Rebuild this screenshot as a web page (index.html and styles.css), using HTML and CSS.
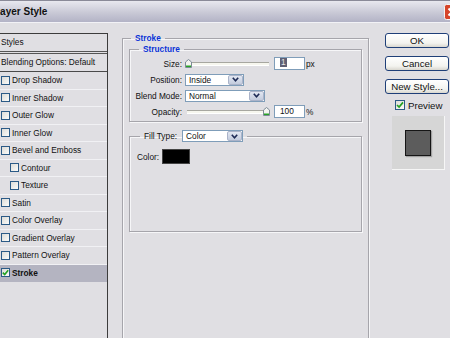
FILE: index.html
```html
<html>
<head>
    <title>Layer Style</title>
    <meta http-equiv="Content-Type" content="text/html; charset=utf-8"/>
    <link rel="stylesheet" href="styles.css">
</head>
<body>
<div class="dialog">
    <div class="titlebar">
        <span class="title">Layer Style</span>
        <span class="close">
            <svg width="16" height="16" viewBox="0 0 16 16">
                <rect x="0.5" y="0.5" width="15" height="15" rx="2" fill="#d6452a" stroke="#f4f4f4"/>
                <path d="M4.5 4.5 L11.5 11.5 M11.5 4.5 L4.5 11.5" stroke="#fff" stroke-width="2"/>
            </svg>
        </span>
    </div>

    <div class="content">
        <div class="styles">
            <div class="styles-head">Styles</div>
            <div class="styles-blend">Blending Options: Default</div>
            <ul class="style-list">
                <li><span class="check"></span>Drop Shadow</li>
                <li><span class="check"></span>Inner Shadow</li>
                <li><span class="check"></span>Outer Glow</li>
                <li><span class="check"></span>Inner Glow</li>
                <li><span class="check"></span>Bevel and Emboss</li>
                <li class="sub"><span class="check"></span>Contour</li>
                <li class="sub"><span class="check"></span>Texture</li>
                <li><span class="check"></span>Satin</li>
                <li><span class="check"></span>Color Overlay</li>
                <li><span class="check"></span>Gradient Overlay</li>
                <li><span class="check"></span>Pattern Overlay</li>
                <li class="active">
                    <span class="check">
                        <svg width="7" height="7" viewBox="0 0 7 7"><path d="M0.8 3.6 L2.7 5.5 L6.2 1.2" fill="none" stroke="#22a022" stroke-width="1.6"/></svg>
                    </span>Stroke
                </li>
            </ul>
        </div>

        <fieldset class="group stroke">
            <legend>Stroke</legend>

            <fieldset class="group structure">
                <legend>Structure</legend>

                <div class="field">
                    <label>Size:</label>
                    <div class="slider">
                        <span class="thumb thumb-start">
                            <svg width="7" height="9" viewBox="0 0 7 9"><path d="M0.5 3 L3.5 0.5 L6.5 3 V8.5 H0.5Z" fill="#f4f4f0" stroke="#7d8b96"/><rect x="1" y="6.5" width="5" height="1.5" fill="#27a327"/></svg>
                        </span>
                    </div>
                    <span class="num"><span class="selected">1</span></span>
                    <span class="unit">px</span>
                </div>

                <div class="field">
                    <label>Position:</label>
                    <div class="select position">
                        <span class="select-text">Inside</span>
                        <span class="select-arrow"><svg width="7" height="5" viewBox="0 0 7 5"><path d="M0.8 0.8 L3.5 3.8 L6.2 0.8" fill="none" stroke="#1d2a55" stroke-width="1.6"/></svg></span>
                    </div>
                </div>

                <div class="field">
                    <label>Blend Mode:</label>
                    <div class="select blend">
                        <span class="select-text">Normal</span>
                        <span class="select-arrow"><svg width="7" height="5" viewBox="0 0 7 5"><path d="M0.8 0.8 L3.5 3.8 L6.2 0.8" fill="none" stroke="#1d2a55" stroke-width="1.6"/></svg></span>
                    </div>
                </div>

                <div class="field">
                    <label>Opacity:</label>
                    <div class="slider">
                        <span class="thumb thumb-end">
                            <svg width="7" height="9" viewBox="0 0 7 9"><path d="M0.5 3 L3.5 0.5 L6.5 3 V8.5 H0.5Z" fill="#f4f4f0" stroke="#7d8b96"/><rect x="1" y="6.5" width="5" height="1.5" fill="#27a327"/></svg>
                        </span>
                    </div>
                    <span class="num">100</span>
                    <span class="unit">%</span>
                </div>
            </fieldset>

            <fieldset class="group fill">
                <legend>
                    <label>Fill Type:</label>
                    <div class="select filltype">
                        <span class="select-text">Color</span>
                        <span class="select-arrow"><svg width="7" height="5" viewBox="0 0 7 5"><path d="M0.8 0.8 L3.5 3.8 L6.2 0.8" fill="none" stroke="#1d2a55" stroke-width="1.6"/></svg></span>
                    </div>
                </legend>
                <div class="color-field">
                    <label>Color:</label>
                    <span class="swatch"></span>
                </div>
            </fieldset>
        </fieldset>

        <div class="actions">
            <button>OK</button>
            <button>Cancel</button>
            <button>New Style...</button>
            <div class="preview-check">
                <span class="check big">
                    <svg width="8" height="8" viewBox="0 0 8 8"><path d="M1 4 L3.1 6.1 L7 1.4" fill="none" stroke="#22a022" stroke-width="1.7"/></svg>
                </span>Preview
            </div>
            <div class="preview">
                <span class="preview-square"></span>
            </div>
        </div>
    </div>
</div>
</body>
</html>
```

FILE: styles.css
```css
html {
    font-family: "Liberation Sans", Arial, sans-serif;
    margin: 0;
}

body {
    margin: 0;
    width: 450px;
    height: 338px;
    overflow: hidden;
    background: #e0dfe3;
    font-size: 8.3px;
    color: #111;
}

.dialog {
    margin-left: -7px;
    width: 475px;
    height: 338px;
    overflow: hidden;
}

/* title bar */

.titlebar {
    display: flex;
    align-items: center;
    height: 21px;
    padding: 0 8px 0 1px;
    border-top: 1px solid #8a8a98;
    border-bottom: 1px solid #f2f2f6;
    background: linear-gradient(#e8e8ef, #c9c9d6 55%, #b3b3c6);
}

.title {
    font-size: 10px;
    font-weight: bold;
    color: #111;
}

.close {
    margin-left: auto;
    display: flex;
}

/* content */

.content {
    display: flex;
    align-items: flex-start;
    padding-left: 3px;
}

.styles {
    box-sizing: border-box;
    width: 112px;
    height: 305px;
    margin-top: 10px;
    border: 1px solid #3c3c3c;
    border-bottom: none;
}

.styles-head,
.styles-blend {
    height: 17px;
    line-height: 17px;
    padding-left: 4px;
}

.styles-head {
    border-bottom: 3px double #555;
}

.styles-blend {
    border-bottom: 1px solid #4a4a4a;
}

.style-list {
    list-style: none;
    margin: 0;
    padding: 0;
}

.style-list li {
    display: flex;
    align-items: center;
    gap: 2px;
    height: 16.5px;
    padding-left: 4px;
    border-bottom: 1px solid #f1f1f4;
}

.style-list li.sub {
    padding-left: 13px;
}

.style-list li.active {
    background: #b4b4c1;
    font-weight: bold;
    border-bottom-color: #b4b4c1;
}

.check {
    box-sizing: border-box;
    display: inline-flex;
    align-items: center;
    justify-content: center;
    width: 9px;
    height: 9px;
    border: 1px solid #2b5a86;
    background: linear-gradient(135deg, #dcdcd8, #fbfbf9);
}

.check.big {
    width: 10px;
    height: 10px;
}

/* group boxes */

.group {
    margin: 0;
    border: 1px solid #a6a5ab;
    box-shadow: 1px 1px 0 #f6f6f8, inset 1px 1px 0 #f6f6f8;
    min-width: 0;
}

.group > legend {
    padding: 0 4px;
    line-height: 10px;
    font-weight: bold;
    color: #0b33d6;
}

.stroke {
    box-sizing: border-box;
    width: 247px;
    height: 312px;
    margin: 10px 0 0 14px;
    padding: 0 6px;
}

.stroke > legend {
    margin-left: 2px;
}

.structure {
    padding: 0 0 3px 0;
    margin-top: 1px;
    display: flex;
    flex-direction: column;
    gap: 3px;
}

.structure > legend {
    margin-left: 9px;
}

.field {
    display: flex;
    align-items: center;
    gap: 3px;
    height: 13px;
}

.field:first-of-type {
    margin-top: 3px;
}

.field label {
    width: 52px;
    text-align: right;
}

.slider {
    position: relative;
    width: 86px;
    height: 13px;
}

.slider::before {
    content: "";
    position: absolute;
    left: 2px;
    right: 2px;
    top: 5px;
    height: 2px;
    background: #f6f6ee;
    border-top: 1px solid #a7a7a0;
    border-bottom: 1px solid #fff;
}

.thumb {
    position: absolute;
    top: 2px;
    display: flex;
}

.thumb-start {
    left: 0;
}

.thumb-end {
    right: 1px;
}

.num {
    box-sizing: border-box;
    width: 31px;
    height: 13px;
    padding-left: 5px;
    line-height: 11px;
    background: #fff;
    border: 1px solid #7f9db9;
}

.num .selected {
    display: inline-block;
    background: #5f6074;
    color: #e8e8e8;
    padding: 0 1px;
    line-height: 9px;
}

.unit {
    margin-left: -2px;
}

.select {
    box-sizing: border-box;
    display: flex;
    height: 12px;
    background: #fff;
    border: 1px solid #7f9db9;
}

.select-text {
    flex: 1;
    padding-left: 3px;
    line-height: 10px;
}

.select-arrow {
    display: flex;
    align-items: center;
    justify-content: center;
    width: 13px;
    border: 1px solid #aab3c9;
    border-radius: 2px;
    background: linear-gradient(#e2e7f2, #c3cbdd);
}

.position {
    width: 59px;
}

.blend {
    width: 80px;
}

.filltype {
    width: 61px;
    font-weight: normal;
    color: #111;
}

.fill {
    margin-top: 8px;
    padding: 0 0 67px 7px;
}

.fill > legend {
    display: flex;
    align-items: center;
    gap: 5px;
    margin-left: 3px;
    font-weight: normal;
    color: #111;
}

.color-field {
    display: flex;
    align-items: center;
    gap: 3px;
    margin-top: 7px;
}

.swatch {
    width: 28px;
    height: 15px;
    background: #000;
    border: 1px solid #444;
    box-sizing: border-box;
}

/* right column */

.actions {
    display: flex;
    flex-direction: column;
    margin: 10px 0 0 16px;
    font-size: 9.7px;
}

.actions button {
    width: 64px;
    height: 15px;
    margin-bottom: 8px;
    padding: 0;
    font-family: "Liberation Sans", Arial, sans-serif;
    font-size: 9.7px;
    color: #111;
    border: 1px solid #1f3f78;
    border-radius: 3px;
    background: linear-gradient(#ffffff, #f3f3ef 70%, #d9d7cf);
}

.preview-check {
    display: flex;
    align-items: center;
    gap: 3px;
    height: 10px;
    margin: -2px 0 0 10px;
}

.preview {
    display: flex;
    align-items: center;
    justify-content: center;
    box-sizing: border-box;
    width: 53px;
    height: 54px;
    margin: 6px 0 0 7px;
    background: #d6d6d6;
    border-right: 1px solid #f6f6f6;
    border-bottom: 1px solid #f6f6f6;
}

.preview-square {
    box-sizing: border-box;
    width: 26px;
    height: 26px;
    background: #5c5c5c;
    border: 1px solid #151515;
    box-shadow: 1px 1px 1px rgba(0, 0, 0, 0.25);
}
```
